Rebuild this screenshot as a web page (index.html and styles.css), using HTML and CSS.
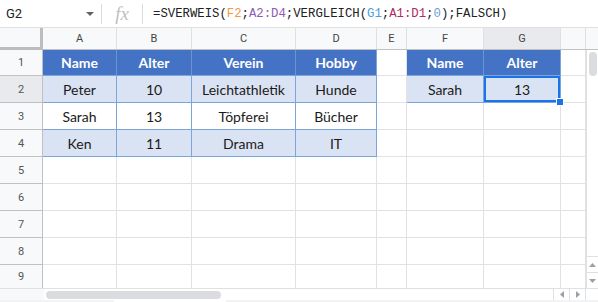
FILE: index.html
```html
<!DOCTYPE html>
<html>
<head>
<meta charset="utf-8">
<link rel="stylesheet" href="styles.css">
</head>
<body>
<div class="app">
  <div class="fbar">
    <div class="namebox"><span class="ref">G2</span><span class="caret"></span></div>
    <div class="sep"></div>
    <div class="fx">fx</div>
    <div class="sep"></div>
    <div class="formula">=SVERWEIS(<span class="c-or">F2</span>;<span class="c-pu">A2:D4</span>;VERGLEICH(<span class="c-bl">G1</span>;<span class="c-ma">A1:D1</span>;<span class="c-nu">0</span>);FALSCH)</div>
  </div>
  <div class="colhead">
    <div class="corner"></div>
    <div class="ch w-a">A</div>
    <div class="ch w-b">B</div>
    <div class="ch w-c">C</div>
    <div class="ch w-d">D</div>
    <div class="ch w-e">E</div>
    <div class="ch w-f">F</div>
    <div class="ch w-g sel">G</div>
    <div class="ch w-h"></div>
    <div class="ch rest"></div>
  </div>
  <div class="body">
    <div class="rows">
      <div class="row r1">
        <div class="rh">1</div>
        <div class="c w-a hd">Name</div>
        <div class="c w-b hd">Alter</div>
        <div class="c w-c hd">Verein</div>
        <div class="c w-d hd hd-last">Hobby</div>
        <div class="c w-e"></div>
        <div class="c w-f hd">Name</div>
        <div class="c w-g hd hd-last">Alter</div>
        <div class="c w-h"></div>
      </div>
      <div class="row">
        <div class="rh sel">2</div>
        <div class="c w-a band">Peter</div>
        <div class="c w-b band">10</div>
        <div class="c w-c band">Leichtathletik</div>
        <div class="c w-d band last">Hunde</div>
        <div class="c w-e"></div>
        <div class="c w-f band">Sarah</div>
        <div class="c w-g band last active">13<span class="handle"></span></div>
        <div class="c w-h"></div>
      </div>
      <div class="row">
        <div class="rh">3</div>
        <div class="c w-a plain">Sarah</div>
        <div class="c w-b plain">13</div>
        <div class="c w-c plain">Töpferei</div>
        <div class="c w-d plain last">Bücher</div>
        <div class="c w-e"></div>
        <div class="c w-f"></div>
        <div class="c w-g"></div>
        <div class="c w-h"></div>
      </div>
      <div class="row">
        <div class="rh">4</div>
        <div class="c w-a band">Ken</div>
        <div class="c w-b band">11</div>
        <div class="c w-c band">Drama</div>
        <div class="c w-d band last">IT</div>
        <div class="c w-e"></div>
        <div class="c w-f"></div>
        <div class="c w-g"></div>
        <div class="c w-h"></div>
      </div>
      <div class="row">
        <div class="rh">5</div>
        <div class="c w-a"></div><div class="c w-b"></div><div class="c w-c"></div><div class="c w-d"></div><div class="c w-e"></div><div class="c w-f"></div><div class="c w-g"></div><div class="c w-h"></div>
      </div>
      <div class="row">
        <div class="rh">6</div>
        <div class="c w-a"></div><div class="c w-b"></div><div class="c w-c"></div><div class="c w-d"></div><div class="c w-e"></div><div class="c w-f"></div><div class="c w-g"></div><div class="c w-h"></div>
      </div>
      <div class="row">
        <div class="rh">7</div>
        <div class="c w-a"></div><div class="c w-b"></div><div class="c w-c"></div><div class="c w-d"></div><div class="c w-e"></div><div class="c w-f"></div><div class="c w-g"></div><div class="c w-h"></div>
      </div>
      <div class="row">
        <div class="rh">8</div>
        <div class="c w-a"></div><div class="c w-b"></div><div class="c w-c"></div><div class="c w-d"></div><div class="c w-e"></div><div class="c w-f"></div><div class="c w-g"></div><div class="c w-h"></div>
      </div>
      <div class="row r9">
        <div class="rh">9</div>
        <div class="c w-a"></div><div class="c w-b"></div><div class="c w-c"></div><div class="c w-d"></div><div class="c w-e"></div><div class="c w-f"></div><div class="c w-g"></div><div class="c w-h"></div>
      </div>
    </div>
    <div class="vscroll">
      <div class="vthumb"></div>
      <div class="vspace"></div>
      <div class="arrow"><svg width="7" height="4" viewBox="0 0 7 4"><path d="M0 4L3.5 0L7 4Z" fill="#9aa0a6"/></svg></div>
      <div class="arrow"><svg width="7" height="4" viewBox="0 0 7 4"><path d="M0 0L7 0L3.5 4Z" fill="#9aa0a6"/></svg></div>
    </div>
  </div>
  <div class="hscroll">
    <div class="hcorner"></div>
    <div class="htrack"><div class="hthumb"></div></div>
    <div class="harrow"><svg width="4" height="7" viewBox="0 0 4 7"><path d="M4 0L4 7L0 3.5Z" fill="#9aa0a6"/></svg></div>
    <div class="harrow"><svg width="4" height="7" viewBox="0 0 4 7"><path d="M0 0L4 3.5L0 7Z" fill="#9aa0a6"/></svg></div>
    <div class="hend"></div>
  </div>
  <div class="tabs">
    <div class="tab-a"></div><div class="tab-b"></div><div class="tab-c"></div>
  </div>
</div>
</body>
</html>
```
FILE: styles.css
```css
* { box-sizing: border-box; }
html, body { margin: 0; padding: 0; background: #fff; }
.app { width: 598px; height: 302px; overflow: hidden; font-family: Roboto, "Liberation Sans", sans-serif; }

.fbar { height: 28px; display: flex; align-items: center; border-bottom: 1px solid #e0e0e0; }
.namebox { width: 101px; display: flex; align-items: center; padding-left: 6px; padding-right: 6px; }
.ref { font-size: 13px; color: #202124; flex: 1; }
.caret { width: 0; height: 0; border-left: 4px solid transparent; border-right: 4px solid transparent; border-top: 4px solid #5f6368; margin-right: 1px; }
.sep { width: 1px; height: 20px; background: #dadce0; }
.fx { width: 40px; text-align: center; font-family: "Liberation Serif", serif; font-style: italic; font-size: 19px; color: #c0c0c0; line-height: 20px; }
.formula { padding-left: 10px; font-family: "Liberation Mono", monospace; font-size: 12.3px; color: #202124; white-space: nowrap; }
.c-or { color: #f29a3d; }
.c-pu { color: #9159b5; }
.c-bl { color: #4aa0d8; }
.c-ma { color: #b02a64; }
.c-nu { color: #6c9fd6; }

.colhead { height: 22px; display: flex; background: #f8f9fa; border-bottom: 1px solid #c0c0c0; }
.corner { width: 43px; border-right: 3px solid #bdbdbd; border-bottom: 3px solid #bdbdbd; background: #f8f9fa; height: 22px; margin-bottom: -1px; }
.ch { border-right: 1px solid #e0e0e0; font-size: 11px; color: #444; display: flex; align-items: center; justify-content: center; }
.ch.sel { background: #e8eaed; }
.ch.rest { flex: 1; border-right: none; }

.w-a { width: 74px; }
.w-b { width: 75px; }
.w-c { width: 104px; }
.w-d { width: 81px; }
.w-e { width: 30px; }
.w-f { width: 77px; }
.w-g { width: 77px; }
.w-h { width: 25px; }

.body { display: flex; height: 238px; }
.rows { width: 586px; }
.row { display: flex; height: 27px; }
.row.r1 { height: 26px; }
.row.r9 { height: 23px; }
.rh { width: 43px; flex: none; background: #f8f9fa; border-right: 1px solid #c0c0c0; border-bottom: 1px solid #c0c0c0; font-size: 11px; color: #555; display: flex; align-items: center; justify-content: center; }
.rh.sel { background: #e8eaed; }
.c { flex: none; border-right: 1px solid #e2e2e2; border-bottom: 1px solid #e2e2e2; display: flex; align-items: center; justify-content: center; font-family: Lato, "Open Sans", sans-serif; font-size: 14px; color: #1a1a1a; position: relative; }
.r9 .c, .r9 .rh { border-bottom: none; }
.hd { background: #4472c4; color: #fff; font-weight: bold; border-right-color: #6d93d4; border-bottom-color: #7aa6dc; }
.hd-last { border-right-color: #7aa6dc; }
.band { background: #dae3f3; border-right-color: #7aa6dc; border-bottom-color: #7aa6dc; }
.plain { background: #fff; border-right-color: #7aa6dc; border-bottom-color: #7aa6dc; }
.active { box-shadow: inset 0 0 0 2px #1a73e8; }
.handle { position: absolute; width: 6px; height: 6px; background: #1a73e8; border: 1px solid #fff; right: -4px; bottom: -4px; box-sizing: content-box; z-index: 2; }

.vscroll { width: 12px; border-left: 1px solid #e0e0e0; display: flex; flex-direction: column; }
.vthumb { width: 8px; height: 24px; margin: 2px 0 0 2px; border-radius: 4px; background: #dadce0; }
.vspace { flex: 1; }
.arrow { height: 16px; display: flex; align-items: center; justify-content: center; border-top: 1px solid #e0e0e0; }
.arrow:last-child { height: 16px; }

.hscroll { height: 12px; display: flex; border-top: 1px solid #e0e0e0; }
.hcorner { width: 44px; background: #f8f9fa; }
.htrack { width: 509px; position: relative; }
.hthumb { position: absolute; left: 2px; top: 2px; width: 175px; height: 8px; border-radius: 4px; background: #dadce0; }
.harrow { width: 16px; display: flex; align-items: center; justify-content: center; border-left: 1px solid #e0e0e0; }
.hend { flex: 1; border-left: 1px solid #e0e0e0; }

.tabs { height: 3px; display: flex; background: #f1f3f4; }
.tab-a { width: 114px; }
.tab-b { width: 112px; background: #fff; }
.tab-c { flex: 1; }
```
